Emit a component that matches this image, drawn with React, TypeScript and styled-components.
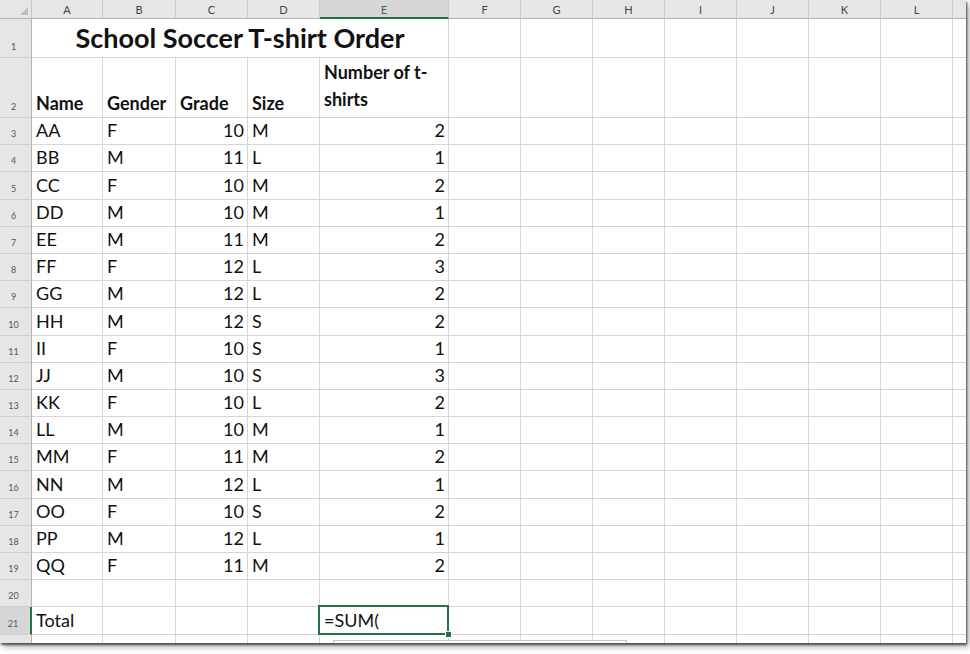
import * as React from 'react';
import styled, { createGlobalStyle, css } from 'styled-components';

const GlobalStyle = createGlobalStyle`
  html, body {
    margin: 0;
    padding: 0;
    background: #ffffff;
  }
  body {
    font-family: Lato, 'Open Sans', Arial, sans-serif;
  }
`;

const COLUMNS = ['A', 'B', 'C', 'D', 'E', 'F', 'G', 'H', 'I', 'J', 'K', 'L', 'M'];
const SELECTED_COL = 'E';
const SELECTED_ROW = 21;

type Order = [string, string, number, string, number];

const orders: Order[] = [
  ['AA', 'F', 10, 'M', 2],
  ['BB', 'M', 11, 'L', 1],
  ['CC', 'F', 10, 'M', 2],
  ['DD', 'M', 10, 'M', 1],
  ['EE', 'M', 11, 'M', 2],
  ['FF', 'F', 12, 'L', 3],
  ['GG', 'M', 12, 'L', 2],
  ['HH', 'M', 12, 'S', 2],
  ['II', 'F', 10, 'S', 1],
  ['JJ', 'M', 10, 'S', 3],
  ['KK', 'F', 10, 'L', 2],
  ['LL', 'M', 10, 'M', 1],
  ['MM', 'F', 11, 'M', 2],
  ['NN', 'M', 12, 'L', 1],
  ['OO', 'F', 10, 'S', 2],
  ['PP', 'M', 12, 'L', 1],
  ['QQ', 'F', 11, 'M', 2],
];

const Page = styled.div`
  width: 970px;
  height: 654px;
  overflow: hidden;
`;

const Sheet = styled.div`
  position: relative;
  width: 966px;
  height: 643px;
  overflow: hidden;
  box-shadow: 1px 2px 2px rgba(0, 0, 0, 0.6), 3px 4px 6px rgba(0, 0, 0, 0.3);
  background: #fff;
`;

const Grid = styled.div`
  display: grid;
  grid-template-columns: 32px 71px 73px 72px 72px 129px repeat(7, 72px) 40px;
  grid-template-rows: 19px 39px 60px repeat(19, 27.2px) 28px;
  color: #111;
`;

const Corner = styled.div`
  background: #e6e6e6;
  border-right: 1px solid #c6c6c6;
  border-bottom: 1px solid #b4b4b4;
  display: flex;
  align-items: flex-end;
  justify-content: flex-end;
  padding: 0 3px 3px 0;
  box-sizing: border-box;
`;

const ColHeader = styled.div<{ $active?: boolean }>`
  background: ${(p) => (p.$active ? '#d6d6d6' : '#e6e6e6')};
  border-right: 1px solid #c9c9c9;
  border-bottom: ${(p) => (p.$active ? '2px solid #217346' : '1px solid #b4b4b4')};
  box-sizing: border-box;
  font-size: 11px;
  color: ${(p) => (p.$active ? '#3a6e4c' : '#444')};
  display: flex;
  align-items: center;
  justify-content: center;
  padding-top: 1px;
`;

const RowHeader = styled.div<{ $active?: boolean }>`
  background: ${(p) => (p.$active ? '#d6d6d6' : '#e6e6e6')};
  border-right: ${(p) => (p.$active ? '2px solid #217346' : '1px solid #b4b4b4')};
  border-bottom: 1px solid #cfcfcf;
  box-sizing: border-box;
  font-size: 9px;
  color: ${(p) => (p.$active ? '#3a6e4c' : '#555')};
  display: flex;
  align-items: flex-end;
  justify-content: center;
  padding: 0 4px 5px 0;
`;

const Cell = styled.div<{ $align?: 'left' | 'right'; $bold?: boolean; $selected?: boolean }>`
  position: relative;
  border-right: 1px solid #d6d6d6;
  border-bottom: 1px solid #d6d6d6;
  box-sizing: border-box;
  display: flex;
  align-items: flex-end;
  justify-content: ${(p) => (p.$align === 'right' ? 'flex-end' : 'flex-start')};
  padding: 0 3px 4px 4px;
  font-size: 18px;
  line-height: 20px;
  font-weight: ${(p) => (p.$bold ? 700 : 400)};
  white-space: nowrap;
  ${(p) =>
    p.$selected &&
    css`
      z-index: 2;
      &::after {
        content: '';
        position: absolute;
        left: -2px;
        top: -2px;
        right: -1px;
        bottom: -1px;
        border: 2px solid #217346;
      }
      &::before {
        content: '';
        position: absolute;
        right: -4px;
        bottom: -4px;
        width: 5px;
        height: 5px;
        background: #217346;
        border: 1px solid #fff;
        z-index: 3;
      }
    `}
`;

const TitleCell = styled.div`
  grid-column: 2 / 7;
  border-right: 1px solid #d6d6d6;
  border-bottom: 1px solid #d6d6d6;
  box-sizing: border-box;
  display: flex;
  align-items: flex-end;
  justify-content: center;
  font-size: 27px;
  font-weight: 700;
  line-height: 30px;
  padding-bottom: 4px;
`;

const WrapText = styled.span`
  white-space: normal;
  line-height: 27px;
`;

const Autocomplete = styled.div`
  position: absolute;
  left: 333px;
  top: 640px;
  width: 292px;
  height: 30px;
  background: #fff;
  border: 1px solid #c6c6c6;
  z-index: 4;
`;

const CornerMark = () => (
  <svg width="8" height="8" viewBox="0 0 8 8">
    <polygon points="8,0 8,8 0,8" fill="#bdbdbd" />
  </svg>
);

const rowCells = (row: number, values: (string | number | null)[]) => {
  const cells: React.ReactNode[] = [];
  cells.push(
    <RowHeader key={`h${row}`} $active={row === SELECTED_ROW}>
      {row}
    </RowHeader>,
  );
  COLUMNS.forEach((col, i) => {
    const v = values[i];
    const isNumber = typeof v === 'number';
    const selected = row === SELECTED_ROW && col === SELECTED_COL;
    cells.push(
      <Cell key={`${col}${row}`} $align={isNumber ? 'right' : 'left'} $selected={selected}>
        {v}
      </Cell>,
    );
  });
  return cells;
};

export default function App() {
  const bodyRows: (string | number | null)[][] = orders.map((o) => [...o]);
  bodyRows.push([]);
  bodyRows.push(['Total', null, null, null, '=SUM(']);

  return (
    <Page>
      <GlobalStyle />
      <Sheet>
        <Grid>
          <Corner>
            <CornerMark />
          </Corner>
          {COLUMNS.map((c) => (
            <ColHeader key={c} $active={c === SELECTED_COL}>
              {c === 'M' ? null : c}
            </ColHeader>
          ))}

          <RowHeader>1</RowHeader>
          <TitleCell>School Soccer T-shirt Order</TitleCell>
          {COLUMNS.slice(5).map((c) => (
            <Cell key={`${c}1`} />
          ))}

          <RowHeader>2</RowHeader>
          <Cell $bold>Name</Cell>
          <Cell $bold>Gender</Cell>
          <Cell $bold>Grade</Cell>
          <Cell $bold>Size</Cell>
          <Cell $bold>
            <WrapText>
              Number of t-
              <br />
              shirts
            </WrapText>
          </Cell>
          {COLUMNS.slice(5).map((c) => (
            <Cell key={`${c}2`} />
          ))}

          {bodyRows.map((vals, i) => rowCells(i + 3, vals))}

          <RowHeader />
          {COLUMNS.map((c) => (
            <Cell key={`${c}22`} />
          ))}
        </Grid>
        <Autocomplete />
      </Sheet>
    </Page>
  );
}
